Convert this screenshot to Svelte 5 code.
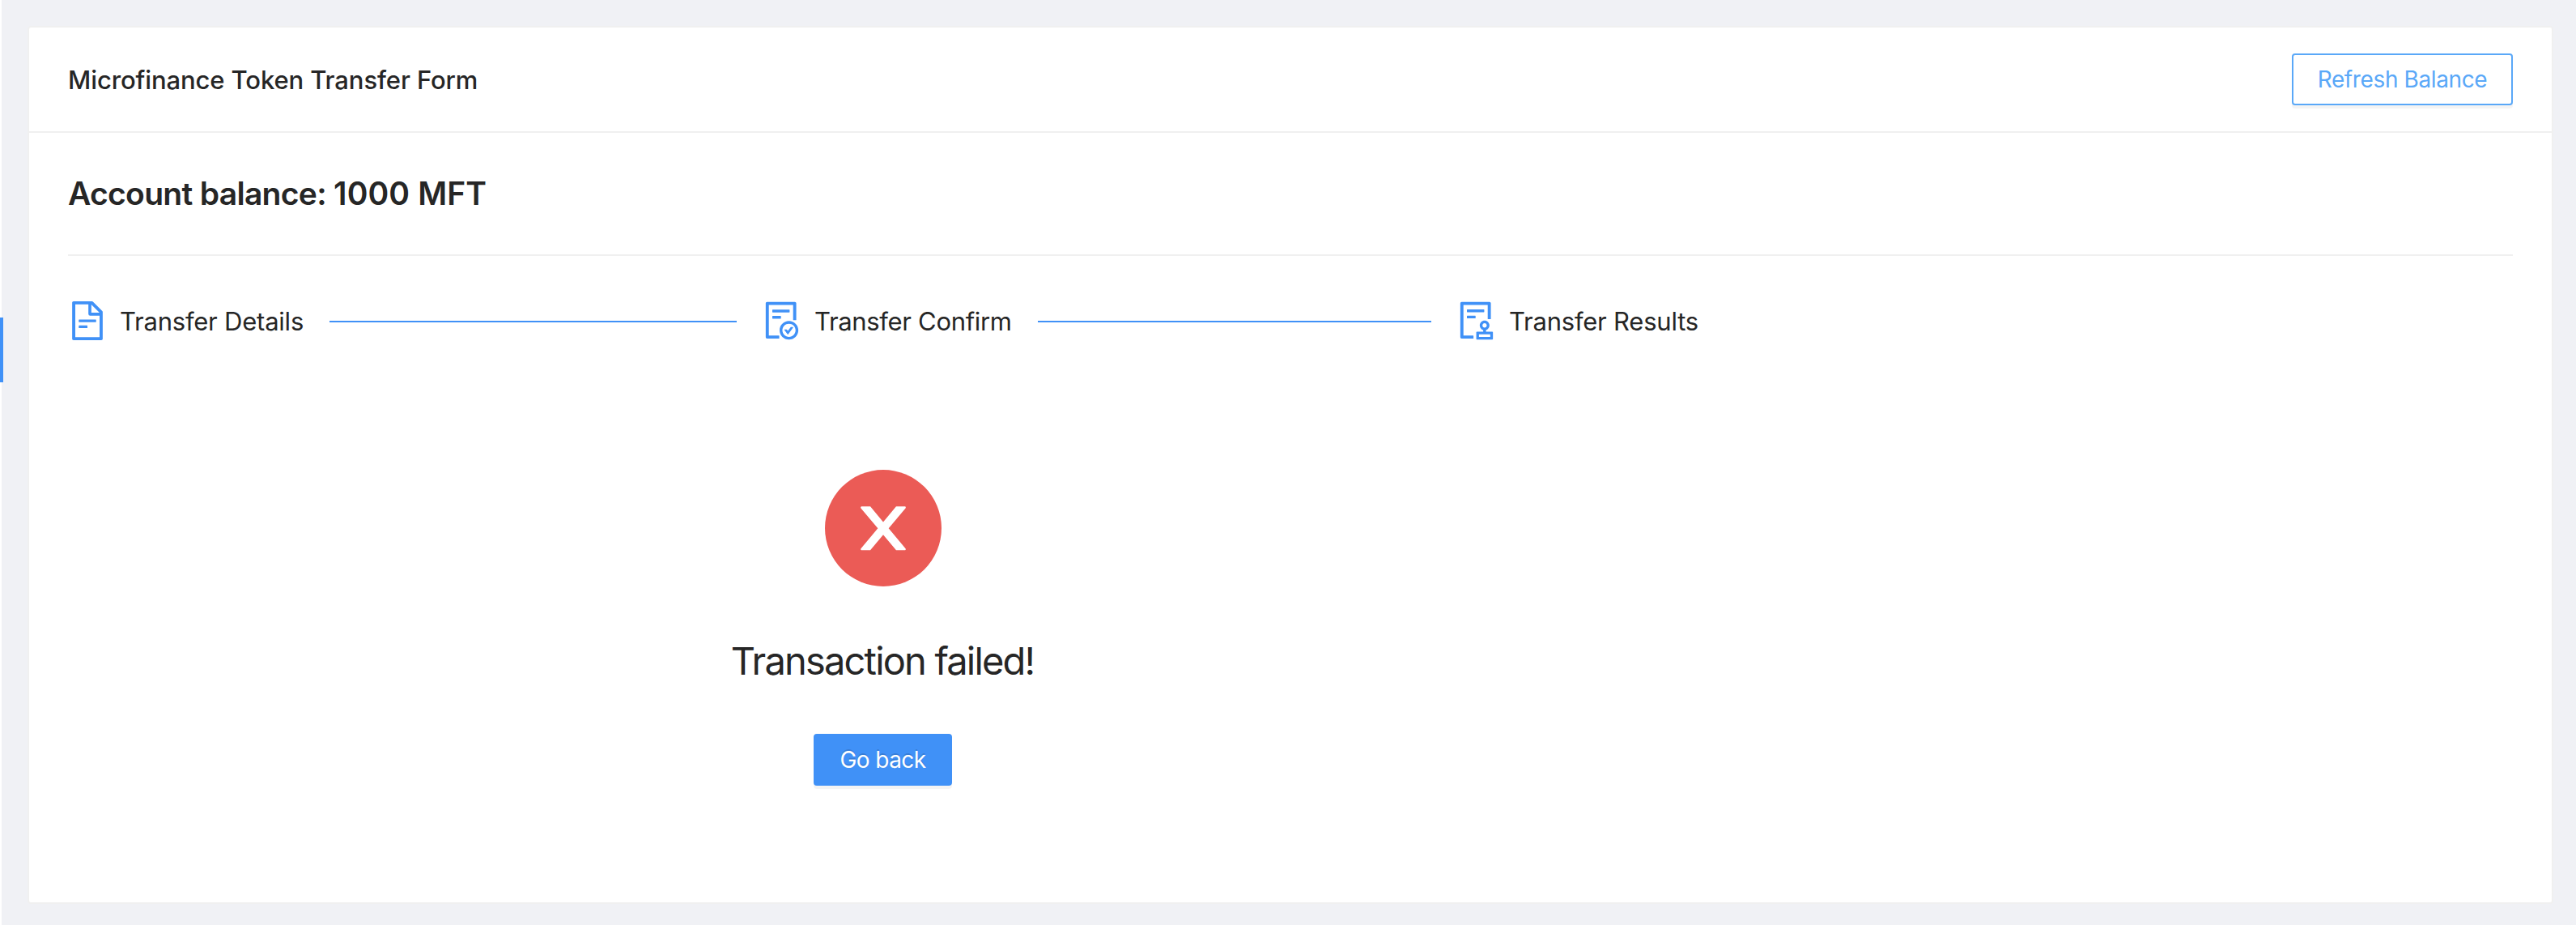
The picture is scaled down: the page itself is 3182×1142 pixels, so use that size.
<script>
  const steps = [
    {
      title: 'Transfer Details',
      tone: 'details',
      path: 'M854.6 288.6L639.4 73.4c-6-6-14.1-9.4-22.6-9.4H192c-17.7 0-32 14.3-32 32v832c0 17.7 14.3 32 32 32h640c17.7 0 32-14.3 32-32V311.3c0-8.5-3.4-16.7-9.4-22.7zM790.2 326H602V137.8L790.2 326zm1.8 562H232V136h302v216a42 42 0 0 0 42 42h216v494zM504 618H320c-4.4 0-8 3.6-8 8v48c0 4.4 3.6 8 8 8h184c4.4 0 8-3.6 8-8v-48c0-4.4-3.6-8-8-8zM312 490v48c0 4.4 3.6 8 8 8h384c4.4 0 8-3.6 8-8v-48c0-4.4-3.6-8-8-8H320c-4.4 0-8 3.6-8 8z'
    },
    {
      title: 'Transfer Confirm',
      tone: 'confirm',
      path: 'M688 312v-48c0-4.4-3.6-8-8-8H296c-4.4 0-8 3.6-8 8v48c0 4.4 3.6 8 8 8h384c4.4 0 8-3.6 8-8zm-392 88c-4.4 0-8 3.6-8 8v48c0 4.4 3.6 8 8 8h184c4.4 0 8-3.6 8-8v-48c0-4.4-3.6-8-8-8H296zm376 116c-119.3 0-216 96.7-216 216s96.7 216 216 216 216-96.7 216-216-96.7-216-216-216zm107.5 323.5C750.8 868.2 712.6 884 672 884s-78.8-15.8-107.5-44.5C535.8 810.8 520 772.6 520 732s15.8-78.8 44.5-107.5C593.2 595.8 631.4 580 672 580s78.8 15.8 107.5 44.5C808.2 653.2 824 691.4 824 732s-15.8 78.8-44.5 107.5zM761 656h-44.3c-2.6 0-5 1.2-6.5 3.3l-63.5 87.8-23.1-31.9a7.92 7.92 0 0 0-6.5-3.3H573c-6.5 0-10.3 7.4-6.5 12.7l73.8 102.1c3.2 4.4 9.7 4.4 12.9 0l114.2-158c3.9-5.3.1-12.7-6.4-12.7zM440 852H208V148h560v344c0 4.4 3.6 8 8 8h56c4.4 0 8-3.6 8-8V108c0-17.7-14.3-32-32-32H168c-17.7 0-32 14.3-32 32v784c0 17.7 14.3 32 32 32h272c4.4 0 8-3.6 8-8v-56c0-4.4-3.6-8-8-8z'
    },
    {
      title: 'Transfer Results',
      tone: 'results',
      path: 'M296 250c-4.4 0-8 3.6-8 8v48c0 4.4 3.6 8 8 8h384c4.4 0 8-3.6 8-8v-48c0-4.4-3.6-8-8-8H296zm184 144H296c-4.4 0-8 3.6-8 8v48c0 4.4 3.6 8 8 8h184c4.4 0 8-3.6 8-8v-48c0-4.4-3.6-8-8-8zm-48 458H208V148h560v320c0 4.4 3.6 8 8 8h56c4.4 0 8-3.6 8-8V108c0-17.7-14.3-32-32-32H168c-17.7 0-32 14.3-32 32v784c0 17.7 14.3 32 32 32h264c4.4 0 8-3.6 8-8v-56c0-4.4-3.6-8-8-8zm440-88H728v-36.6c46.3-13.8 80-56.6 80-107.4 0-61.9-50.1-112-112-112s-112 50.1-112 112c0 50.7 33.7 93.6 80 107.4V764H520c-8.8 0-16 7.2-16 16v152c0 8.8 7.2 16 16 16h352c8.8 0 16-7.2 16-16V780c0-8.8-7.2-16-16-16zM646 620c0-27.6 22.4-50 50-50s50 22.4 50 50-22.4 50-50 50-50-22.4-50-50zm180 266H566v-60h260v60z'
    }
  ];
</script>

<div class="page">
  <span class="menu-marker"></span>
  <section class="card">
    <header>
      <h1>Microfinance Token Transfer Form</h1>
      <button class="btn ghost">Refresh Balance</button>
    </header>
    <div class="body">
      <h2>Account balance: <span class="amount">1000 MFT</span></h2>
      <hr />
      <div class="form">
        <ol class="steps">
          {#each steps as step, i}
            <li class={step.tone}>
              <svg viewBox="64 64 896 896" aria-hidden="true"><path d={step.path} /></svg>
              <span class="label">{step.title}</span>
              {#if i < steps.length - 1}<span class="tail"></span>{/if}
            </li>
          {/each}
        </ol>
        <div class="result">
          <svg class="failed" viewBox="64 64 896 896" aria-hidden="true">
            <circle cx="512" cy="512" r="448" />
            <path d="M677.4 682.2l-66-.3L512 563.4l-99.3 118.4-66.1.3c-4.4 0-8-3.5-8-8 0-1.9.7-3.7 1.9-5.2l130.1-155L340.5 359a8.32 8.32 0 0 1-1.9-5.2c0-4.4 3.6-8 8-8l66.1.3L512 464.6l99.3-118.4 66-.3c4.4 0 8 3.5 8 8 0 1.9-.7 3.7-1.9 5.2L553.5 514l130 155c1.2 1.5 1.9 3.3 1.9 5.2 0 4.4-3.6 8-8 8z" />
          </svg>
          <h3>Transaction failed!</h3>
          <button class="btn primary">Go back</button>
        </div>
      </div>
    </div>
  </section>
</div>

<style>
  :global(body) {
    background: #fff;
  }
  .page {
    position: relative;
    box-sizing: border-box;
    height: 1142px;
    margin-left: 2px;
    padding: 32px 28px 26px 32px;
    background: #f0f1f5;
    color: #262626;
    font-family: Inter, 'Liberation Sans', sans-serif;
  }
  .menu-marker {
    position: absolute;
    left: -2px;
    top: 392px;
    width: 4px;
    height: 80px;
    background: #4091f7;
  }
  .card {
    box-sizing: border-box;
    height: 1084px;
    background: #fff;
    border: 2px solid #f0f0f0;
    border-radius: 4px;
  }
  header {
    display: flex;
    align-items: center;
    justify-content: space-between;
    height: 128px;
    padding: 0 48px;
    border-bottom: 2px solid #f0f0f0;
  }
  h1,
  h2,
  h3 {
    margin: 0;
    white-space: nowrap;
  }
  h1 {
    padding-top: 2px;
    font-size: 31px;
    font-weight: 500;
    line-height: 50px;
    letter-spacing: -0.11px;
  }
  .body {
    padding: 48px;
  }
  h2 {
    font-size: 39px;
    font-weight: 600;
    line-height: 54px;
    letter-spacing: -0.7px;
  }
  .amount {
    letter-spacing: 0.12px;
  }
  hr {
    height: 2px;
    margin: 48px 0;
    border: 0;
    background: #f0f0f0;
  }
  .form {
    width: 2013px;
  }
  .steps {
    display: grid;
    grid-template-columns: 826px 826px 297px;
    column-gap: 32px;
    margin: 0;
    padding: 0;
    list-style: none;
  }
  .steps li {
    display: flex;
    align-items: center;
    height: 64px;
    white-space: nowrap;
  }
  .steps svg {
    flex: none;
    width: 48px;
    height: 48px;
    margin-right: 16px;
    fill: #4091f7;
  }
  .label {
    margin-right: 32px;
    padding-top: 2px;
    font-size: 31px;
    line-height: 62px;
  }
  .details .label {
    width: 227px;
    letter-spacing: -0.22px;
  }
  .confirm .label {
    width: 244px;
    letter-spacing: -0.33px;
  }
  .results .label {
    margin-right: 0;
    letter-spacing: -0.22px;
  }
  .tail {
    flex: 1;
    height: 2px;
    margin-top: 2px;
    background: #4091f7;
  }
  .result {
    display: flex;
    flex-direction: column;
    align-items: center;
    padding-top: 152px;
  }
  .failed {
    width: 144px;
    height: 144px;
  }
  .failed circle {
    fill: #eb5b56;
  }
  .failed path {
    fill: #fff;
  }
  h3 {
    margin: 48px 0;
    padding: 2px 1px 0 0;
    font-size: 47px;
    font-weight: 400;
    line-height: 84px;
    letter-spacing: -1.82px;
  }
  .btn {
    box-sizing: border-box;
    height: 64px;
    padding: 1px 0 0;
    border: 2px solid #4091f7;
    border-radius: 4px;
    font: 400 28px/59px Inter, 'Liberation Sans', sans-serif;
    white-space: nowrap;
  }
  .ghost {
    width: 273px;
    border-color: #5aa8f8;
    background: #fff;
    color: #5aa8f8;
    letter-spacing: -0.38px;
    box-shadow: 0 4px 0 rgba(0, 0, 0, 0.045);
  }
  .primary {
    width: 171px;
    background: #4091f7;
    color: #fff;
    letter-spacing: -0.6px;
    text-shadow: 0 -2px 0 rgba(0, 0, 0, 0.12);
    box-shadow: 0 4px 0 rgba(0, 0, 0, 0.045);
  }
</style>
